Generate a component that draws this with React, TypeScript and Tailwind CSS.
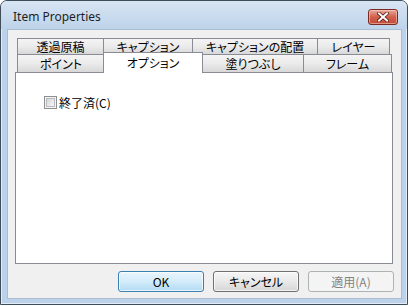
import React from 'react'

const jp = "font-['Noto_Sans_CJK_JP','Noto_Sans',sans-serif] [font-feature-settings:'palt']"

function Tab({ label, w, selected = false, row = 2, first = false }: { label: string; w: number; selected?: boolean; row?: number; first?: boolean }) {
  if (selected) {
    return (
      <div
        className={`relative z-10 -ml-[2px] -mt-[2px] -mb-px h-[21px] flex items-center justify-center border border-b-0 border-[#898c95] bg-white text-[12px] leading-none text-black ${jp}`}
        style={{ width: w }}
      >
        {label}
      </div>
    )
  }
  return (
    <div
      className={`${first ? '' : '-ml-px'} ${row === 1 ? 'h-[16px]' : 'h-[18px] pt-[1px]'} flex items-center justify-center border border-b-0 border-[#898c95] bg-gradient-to-b from-[#f4f4f4] via-[#ebebeb] to-[#d8d8d8] text-[12px] leading-none text-black ${jp}`}
      style={{ width: w }}
    >
      {label}
    </div>
  )
}

function CloseButton() {
  return (
    <div className="w-[30px] h-[16px] rounded-[3px] border border-[#7a2a20] bg-gradient-to-b from-[#e9a99b] via-[#d0604c] to-[#c44a36] shadow-[inset_0_0_0_1px_rgba(255,220,210,0.5)] flex items-center justify-center">
      <svg width="12" height="10" viewBox="0 0 12 10">
        <path d="M2 1.5 L10 8.5 M10 1.5 L2 8.5" stroke="#5a1a12" strokeWidth="3.6" strokeLinecap="square" />
        <path d="M2 1.5 L10 8.5 M10 1.5 L2 8.5" stroke="#ffffff" strokeWidth="2" strokeLinecap="square" />
      </svg>
    </div>
  )
}

function Checkbox() {
  return (
    <div className="w-[13px] h-[13px] border border-[#8e8f8f] bg-[#f4f4f4] flex items-center justify-center">
      <div className="w-[9px] h-[9px] border border-[#b8bbbf] bg-gradient-to-br from-[#d4d6d9] to-[#f7f7f7]" />
    </div>
  )
}

export default function App() {
  return (
    <div className="w-[409px] h-[306px] bg-white">
      {/* Window */}
      <div className="w-[408px] h-[305px] flex flex-col rounded-t-[7px] border border-[#3f4c5a] bg-[#bcd2ea] shadow-[inset_0_0_0_1px_#e4edf7]">
        {/* Title bar */}
        <div className="h-[28px] flex items-start justify-between pl-[12px] pr-[9px] rounded-t-[6px] bg-gradient-to-b from-[#d8e5f3] to-[#bdd3ea]">
          <div className="pt-[8px] text-[12px] leading-[16px] text-[#1e1e1e] font-['Noto_Sans','Segoe_UI',sans-serif]">
            Item Properties
          </div>
          <div className="pt-[8px]">
            <CloseButton />
          </div>
        </div>

        {/* Client area */}
        <div className="ml-[6px] mr-[5px] mb-[5px] flex-1 flex flex-col border border-[#aabcd0] bg-[#f0f0f0] pt-[8px] pl-[7px]">
          {/* Tabs */}
          <div className="ml-[2px] flex">
            <Tab label="透過原稿" w={87} row={1} first />
            <Tab label="キャプション" w={90} row={1} />
            <Tab label="キャプションの配置" w={126} row={1} />
            <Tab label="レイヤー" w={73} row={1} />
          </div>
          <div className="ml-[2px] flex">
            <Tab label="ポイント" w={88} first />
            <Tab label="オプション" w={100} selected />
            <Tab label="塗りつぶし" w={102} />
            <Tab label="フレーム" w={89} />
          </div>

          {/* Panel */}
          <div className="w-[378px] h-[192px] border border-[#898c95] bg-white pl-[28px] pt-[23px]">
            <div className={`flex items-center gap-[2px] text-[12px] leading-none text-black ${jp}`}>
              <Checkbox />
              <span>終了済(C)</span>
            </div>
          </div>

          {/* Buttons */}
          <div className={`mt-[7px] flex justify-end gap-[9px] pr-[7px] text-[12px] leading-none ${jp}`}>
            <button className="w-[86px] h-[21px] rounded-[3px] border border-[#3c7fb1] bg-gradient-to-b from-[#eaf6fd] via-[#d3ecfa] to-[#b2dbf3] shadow-[inset_0_0_0_1px_rgba(255,255,255,0.7)] text-black">
              OK
            </button>
            <button className="w-[86px] h-[21px] rounded-[3px] border border-[#707070] bg-gradient-to-b from-[#f6f6f6] via-[#e9e9e9] to-[#d6d6d6] shadow-[inset_0_0_0_1px_rgba(255,255,255,0.7)] text-black">
              キャンセル
            </button>
            <button className="w-[86px] h-[21px] rounded-[3px] border border-[#adb2b5] bg-[#f4f4f4] text-[#838383]">
              適用(A)
            </button>
          </div>
        </div>
      </div>
    </div>
  )
}
